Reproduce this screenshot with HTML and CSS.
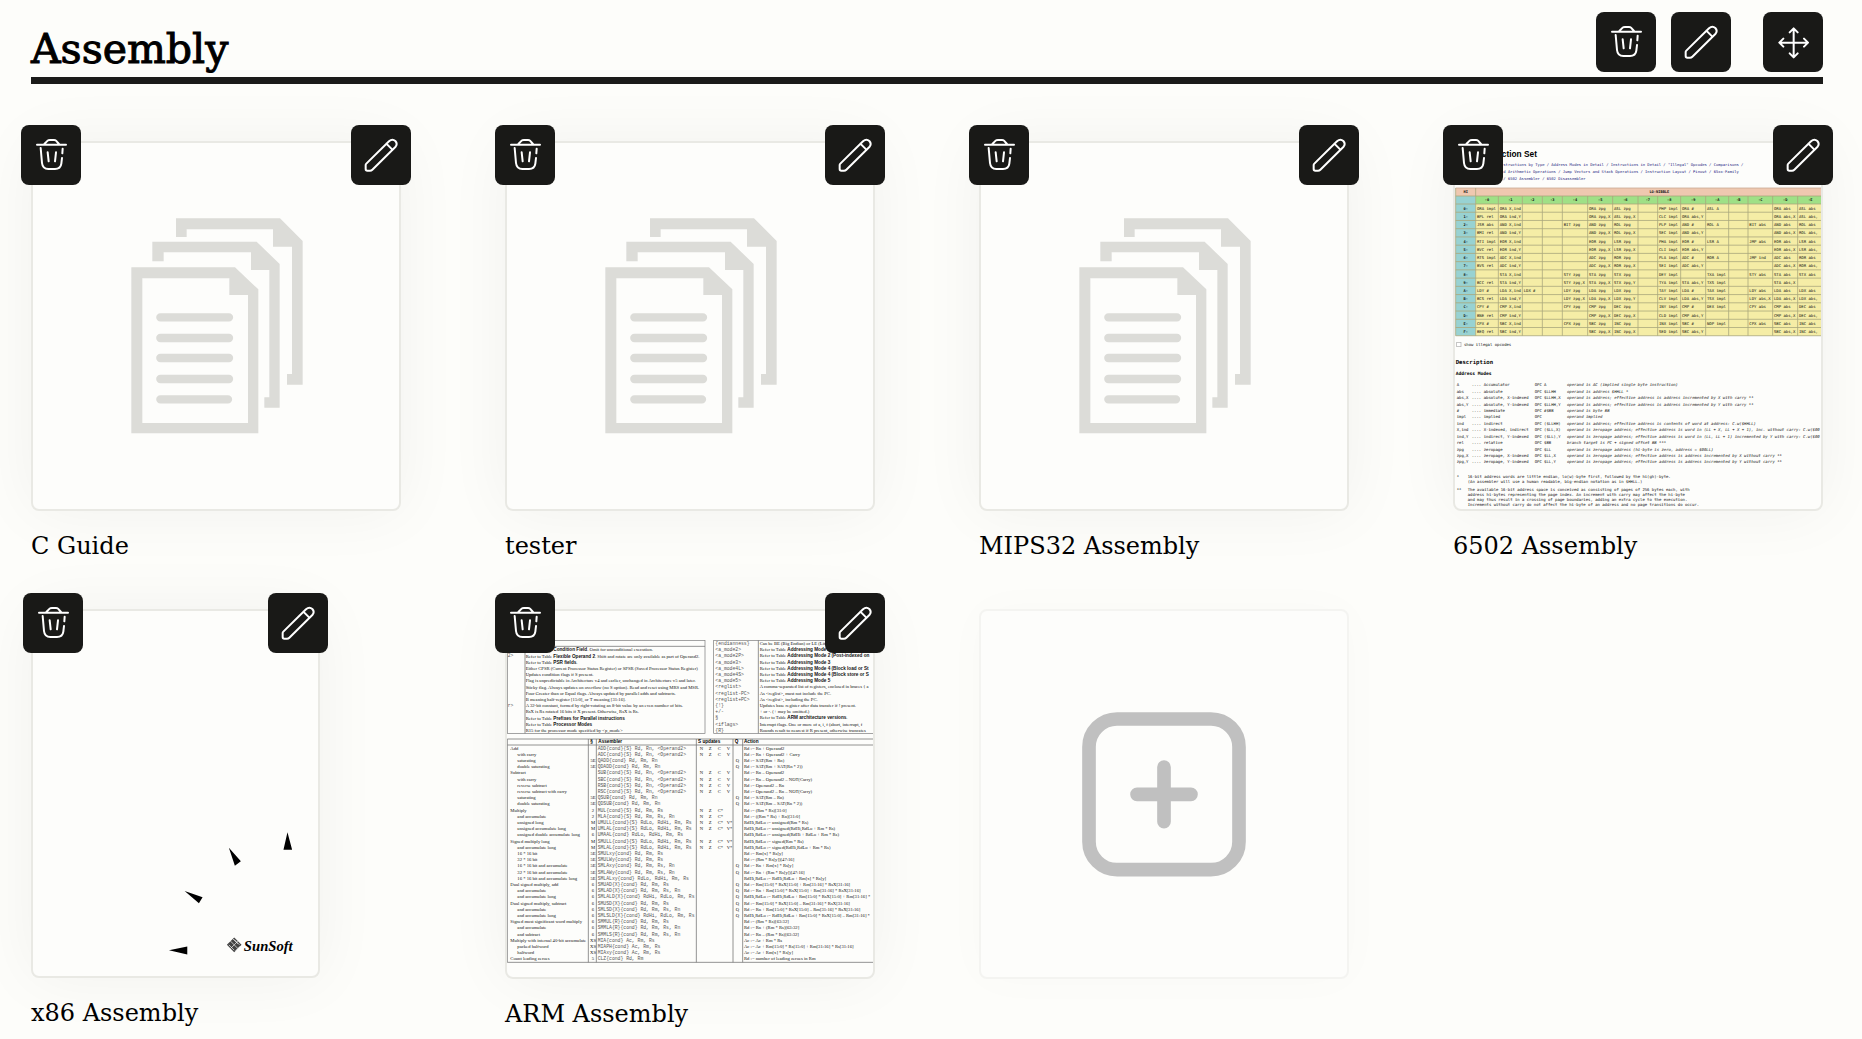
FILE: index.html
```html
<!DOCTYPE html>
<html lang="en">
<head>
<meta charset="utf-8">
<meta name="viewport" content="width=device-width, initial-scale=1">
<title>Assembly</title>
<link rel="stylesheet" href="styles.css">
</head>
<body>
<svg class="sprite" aria-hidden="true">
  <symbol id="trash" viewBox="0 0 180 180">
    <path d="M48 59H135M70 57L80 47Q82 45 87 45H99Q103 45 105 47L114 57M59 69L63 114Q65 132 82 132H102Q119 132 121 116L123 99M125 71L124 85M80 82L83 109M105 82L102 109"/>
  </symbol>
  <symbol id="pencil" viewBox="0 0 180 180">
    <path d="M44 120Q44 118 46 116L114 49Q124 40 133 48Q141 57 133 66L64 134Q61 137 57 137H49Q44 137 44 132ZM106 56L124 74"/>
  </symbol>
  <symbol id="move" viewBox="0 0 180 180">
    <path d="M50 92H134M92 50V134M80 61L92 49L104 61M80 124L92 136L104 124M61 80L49 92L61 104M123 80L135 92L123 104"/>
  </symbol>
  <symbol id="documents" viewBox="-231 -171 1098 1098">
    <path fill-rule="evenodd" d="M64 202H375L445 268V700H64ZM97 235V669H414V285H358V235Z"/>
    <path d="M127 125H440L509 192V623H463V592H478V210H423V157H161V184H127Z"/>
    <path d="M198 55H510L578 123V554H531V522H546V140H489V88H230V111H198Z"/>
    <path class="doc-lines" d="M151 352H357M151 414H357M151 474H357M151 537H357M151 598H354"/>
  </symbol>
</svg>

<main class="page">
  <header class="header">
    <h1 class="title">Assembly</h1>
    <div class="actions">
      <button class="tool" type="button" aria-label="Delete category"><svg class="icon"><use href="#trash"/></svg></button>
      <button class="tool" type="button" aria-label="Edit category"><svg class="icon"><use href="#pencil"/></svg></button>
      <button class="tool tool-move" type="button" aria-label="Move category"><svg class="icon"><use href="#move"/></svg></button>
    </div>
  </header>

  <section class="grid">
    <article class="card">
      <div class="frame">
        <a class="thumb" href="#c-guide" aria-label="C Guide"><svg class="documents"><use href="#documents"/></svg></a>
        <button class="tool tool-left" type="button" aria-label="Delete"><svg class="icon"><use href="#trash"/></svg></button>
        <button class="tool tool-right" type="button" aria-label="Edit"><svg class="icon"><use href="#pencil"/></svg></button>
      </div>
      <h2 class="label">C Guide</h2>
    </article>

    <article class="card">
      <div class="frame">
        <a class="thumb" href="#tester" aria-label="tester"><svg class="documents"><use href="#documents"/></svg></a>
        <button class="tool tool-left" type="button" aria-label="Delete"><svg class="icon"><use href="#trash"/></svg></button>
        <button class="tool tool-right" type="button" aria-label="Edit"><svg class="icon"><use href="#pencil"/></svg></button>
      </div>
      <h2 class="label">tester</h2>
    </article>

    <article class="card">
      <div class="frame">
        <a class="thumb" href="#mips32" aria-label="MIPS32 Assembly"><svg class="documents"><use href="#documents"/></svg></a>
        <button class="tool tool-left" type="button" aria-label="Delete"><svg class="icon"><use href="#trash"/></svg></button>
        <button class="tool tool-right" type="button" aria-label="Edit"><svg class="icon"><use href="#pencil"/></svg></button>
      </div>
      <h2 class="label">MIPS32 Assembly</h2>
    </article>

    <article class="card">
      <div class="frame">
        <a class="thumb" href="#6502" aria-label="6502 Assembly"><svg id="preview-6502" class="preview" viewBox="60 60 10980 10980"></svg></a>
        <button class="tool tool-left" type="button" aria-label="Delete"><svg class="icon"><use href="#trash"/></svg></button>
        <button class="tool tool-right" type="button" aria-label="Edit"><svg class="icon"><use href="#pencil"/></svg></button>
      </div>
      <h2 class="label">6502 Assembly</h2>
    </article>

    <article class="card">
      <div class="frame frame-tall">
        <a class="thumb" href="#x86" aria-label="x86 Assembly">
          <svg class="preview" viewBox="99 93 852 1098">
            <path d="M862 758L876 810H850ZM686 804L722 845L704 858ZM553 934L607 953L596 971ZM506 1112L561 1101V1125Z"/>
            <path fill="#444" d="M702 1074L724 1096L702 1118L680 1096Z"/>
            <path class="sun" d="M691 1085L702 1096L691 1107M698 1078L713 1093M713 1085L702 1096L713 1107M686 1096L702 1112M702 1080L718 1096M706 1114L720 1100"/>
            <text class="sunsoft" x="731" y="1114">SunSoft</text>
          </svg>
        </a>
        <button class="tool tool-left" type="button" aria-label="Delete"><svg class="icon"><use href="#trash"/></svg></button>
        <button class="tool tool-right" type="button" aria-label="Edit"><svg class="icon"><use href="#pencil"/></svg></button>
      </div>
      <h2 class="label">x86 Assembly</h2>
    </article>

    <article class="card">
      <div class="frame">
        <a class="thumb" href="#arm" aria-label="ARM Assembly"><svg id="preview-arm" class="preview" viewBox="60 60 10980 10980"></svg></a>
        <button class="tool tool-left" type="button" aria-label="Delete"><svg class="icon"><use href="#trash"/></svg></button>
        <button class="tool tool-right" type="button" aria-label="Edit"><svg class="icon"><use href="#pencil"/></svg></button>
      </div>
      <h2 class="label">ARM Assembly</h2>
    </article>

    <div class="card">
      <button class="thumb thumb-add" type="button" aria-label="Add item">
        <svg class="add" viewBox="63 63 1098 1098"><rect x="387" y="387" width="450" height="452" rx="84"/><path d="M531 613H693M612 531V695"/></svg>
      </button>
    </div>
  </section>
</main>
<script src="previews.js"></script>
</body>
</html>
```
FILE: styles.css
```css
* { box-sizing: border-box; }

body {
  margin: 0;
  background: #fdfdfa;
  color: #000;
  font-family: "DejaVu Serif", serif;
}

.sprite { position: absolute; width: 0; height: 0; }

.page { padding: 12px 39px 8px 31px; }

.header {
  display: flex;
  align-items: flex-end;
  justify-content: space-between;
  padding-bottom: 5px;
  border-bottom: 7px solid #1b1b19;
}

.title {
  margin: 0;
  font-size: 41px;
  line-height: 46px;
  font-weight: 400;
  -webkit-text-stroke: 1px #000;
}

.actions { display: flex; gap: 15px; }

.tool {
  display: block;
  width: 60px;
  height: 60px;
  padding: 0;
  border: 0;
  border-radius: 8px;
  background: #191917;
  cursor: pointer;
}
.tool-move { margin-left: 17px; }
.tool-left, .tool-right { position: absolute; top: -16px; }
.tool-left { left: -10px; }
.tool-right { right: -10px; }
.frame-tall .tool-left { left: -8px; }
.frame-tall .tool-right { right: -8px; }

.icon {
  display: block;
  width: 100%;
  height: 100%;
  fill: none;
  stroke: #fff;
  stroke-width: 6;
  stroke-linecap: round;
  stroke-linejoin: round;
}

.grid {
  display: grid;
  grid-template-columns: repeat(4, 1fr);
  gap: 47px 104px;
  margin-top: 57px;
}

.frame { position: relative; aspect-ratio: 1; }
.frame-tall { width: 78%; aspect-ratio: 289 / 370; }

.thumb {
  display: block;
  width: 100%;
  height: 100%;
  padding: 0;
  overflow: hidden;
  border: 2px solid #e9e9e4;
  border-radius: 8px;
  background: #fdfdfb;
  box-shadow: 0 0 64px rgba(0, 0, 40, 0.05);
}
.thumb-add {
  height: auto;
  aspect-ratio: 1;
  border-color: #f4f4f1;
  box-shadow: 0 0 48px rgba(0, 0, 40, 0.02);
  cursor: pointer;
}

.label {
  margin: 19px 0 0;
  font-size: 24px;
  line-height: 32px;
  font-weight: 400;
}

.documents, .preview, .add { display: block; width: 100%; height: 100%; }
.documents { fill: #dcdcd8; }
.doc-lines { fill: none; stroke: #dcdcd8; stroke-width: 25; stroke-linecap: round; }
.add { fill: none; stroke: #c0c0c0; stroke-width: 41; stroke-linecap: round; }

.sun { fill: none; stroke: #fff; stroke-width: 2; }
.sunsoft { font: italic bold 44px "Liberation Serif", serif; }

.preview text { white-space: pre; }
.mono { font-family: "DejaVu Sans Mono", monospace; }
.courier { font-family: "Liberation Mono", monospace; }
.sans { font-family: "Liberation Sans", sans-serif; }
.serif { font-family: "Liberation Serif", serif; }
.bold { font-weight: 700; font-family: "Liberation Sans", sans-serif; }
.strong { font-weight: 700; }
.italic { font-style: italic; }
.blue { fill: #222280; }
.dark { fill: #111; }
.grey { fill: #555; }
```
FILE: previews.js
```js
const NS = "http://www.w3.org/2000/svg";
const u = v => Math.round(v * 10);

function add(parent, name, attrs, content) {
  const el = document.createElementNS(NS, name);
  for (const key in attrs) el.setAttribute(key, attrs[key]);
  if (content !== undefined) el.textContent = content;
  parent.appendChild(el);
  return el;
}

function painter(svg) {
  return {
    text(x, y, size, cls, content, anchor) {
      const el = add(svg, "text", { x: u(x), y: u(y), "font-size": u(size), class: cls, "text-anchor": anchor || "start" });
      // Text between @@ pairs is set in bold.
      content.split("@@").forEach((part, i) => part && add(el, "tspan", i % 2 ? { class: "bold" } : {}, part));
    },
    rect(x, y, w, h, fill, stroke) {
      add(svg, "rect", { x: u(x), y: u(y), width: u(w), height: u(h), fill, stroke: stroke || "none", "stroke-width": 20 });
    },
    line(x1, y1, x2, y2, stroke) {
      add(svg, "line", { x1: u(x1), y1: u(y1), x2: u(x2), y2: u(y2), stroke, "stroke-width": 24 });
    }
  };
}

// 6502 instruction set page
(function () {
  const p = painter(document.getElementById("preview-6502"));
  p.text(252, 47, 25, "sans strong", "6502 Instruction Set", "end");
  p.text(151, 75, 11.4, "mono blue", "structions by Type / Address Modes in Detail / Instructions in Detail / \"Illegal\" Opcodes / Comparisons /");
  p.text(151, 95, 11.4, "mono blue", "d Arithmetic Operations / Jump Vectors and Stack Operations / Instruction Layout / Pinout / 65xx-Family");
  p.text(151, 118, 11.4, "mono blue", "/ 6502 Assembler / 6502 Disassembler");

  const cols = [8, 68, 136, 208, 268, 328, 404, 479, 555, 614, 683, 758, 827, 885, 959, 1034, 1110];
  const top = 189, step = 24.7, bottom = top + 16 * step;
  p.rect(8, 141, 1102, 24, "#efc8b0");
  p.rect(8, 165, 60, bottom - 165, "#98d2d2");
  p.rect(68, 165, 1042, 24, "#9fe086");
  p.rect(68, top, 1042, bottom - top, "#f5eda6");
  const grid = "#aaa77c";
  for (let r = 0; r <= 16; r++) p.line(8, top + r * step, 1110, top + r * step, grid);
  p.line(8, 141, 1110, 141, "#c9a894");
  p.line(8, 165, 1110, 165, grid);
  cols.forEach((x, i) => p.line(x, i < 2 ? 141 : 165, x, bottom, grid));
  p.text(38, 157, 11, "mono strong dark", "HI", "middle");
  p.text(619, 157, 11, "mono strong dark", "LO-NIBBLE", "middle");
  const hex = "0123456789ABCDEF";
  for (let c = 0; c < 15; c++) p.text((cols[c + 1] + cols[c + 2]) / 2, 181, 11, "mono strong dark", "-" + hex[c], "middle");

  const ops = [
    "ORA impl|ORA X,ind||||ORA zpg|ASL zpg||PHP impl|ORA #|ASL A|||ORA abs|ASL abs",
    "BPL rel|ORA ind,Y||||ORA zpg,X|ASL zpg,X||CLC impl|ORA abs,Y||||ORA abs,X|ASL abs,",
    "JSR abs|AND X,ind|||BIT zpg|AND zpg|ROL zpg||PLP impl|AND #|ROL A||BIT abs|AND abs|ROL abs",
    "BMI rel|AND ind,Y||||AND zpg,X|ROL zpg,X||SEC impl|AND abs,Y||||AND abs,X|ROL abs,",
    "RTI impl|EOR X,ind||||EOR zpg|LSR zpg||PHA impl|EOR #|LSR A||JMP abs|EOR abs|LSR abs",
    "BVC rel|EOR ind,Y||||EOR zpg,X|LSR zpg,X||CLI impl|EOR abs,Y||||EOR abs,X|LSR abs,",
    "RTS impl|ADC X,ind||||ADC zpg|ROR zpg||PLA impl|ADC #|ROR A||JMP ind|ADC abs|ROR abs",
    "BVS rel|ADC ind,Y||||ADC zpg,X|ROR zpg,X||SEI impl|ADC abs,Y||||ADC abs,X|ROR abs,",
    "|STA X,ind|||STY zpg|STA zpg|STX zpg||DEY impl||TXA impl||STY abs|STA abs|STX abs",
    "BCC rel|STA ind,Y|||STY zpg,X|STA zpg,X|STX zpg,Y||TYA impl|STA abs,Y|TXS impl|||STA abs,X|",
    "LDY #|LDA X,ind|LDX #||LDY zpg|LDA zpg|LDX zpg||TAY impl|LDA #|TAX impl||LDY abs|LDA abs|LDX abs",
    "BCS rel|LDA ind,Y|||LDY zpg,X|LDA zpg,X|LDX zpg,Y||CLV impl|LDA abs,Y|TSX impl||LDY abs,X|LDA abs,X|LDX abs,",
    "CPY #|CMP X,ind|||CPY zpg|CMP zpg|DEC zpg||INY impl|CMP #|DEX impl||CPY abs|CMP abs|DEC abs",
    "BNE rel|CMP ind,Y||||CMP zpg,X|DEC zpg,X||CLD impl|CMP abs,Y||||CMP abs,X|DEC abs,",
    "CPX #|SBC X,ind|||CPX zpg|SBC zpg|INC zpg||INX impl|SBC #|NOP impl||CPX abs|SBC abs|INC abs",
    "BEQ rel|SBC ind,Y||||SBC zpg,X|INC zpg,X||SED impl|SBC abs,Y||||SBC abs,X|INC abs,"
  ];
  ops.forEach((row, r) => {
    const y = top + r * step + 17;
    p.text(38, y, 11, "mono strong dark", hex[r] + "-", "middle");
    row.split("|").forEach((op, c) => op && p.text(cols[c + 1] + 4, y, 11.8, "mono dark", op));
  });

  p.rect(11, 604, 13, 13, "#fff", "#aaa");
  p.text(33, 614, 11.8, "mono dark", "show illegal opcodes");
  p.text(8, 668, 17, "mono strong", "Description");
  p.text(8, 703, 13.8, "mono strong", "Address Modes");

  const modes = [
    "A|....|Accumulator|OPC A|operand is AC (implied single byte instruction)",
    "abs|....|absolute|OPC $LLHH|operand is address $HHLL *",
    "abs,X|....|absolute, X-indexed|OPC $LLHH,X|operand is address; effective address is address incremented by X with carry **",
    "abs,Y|....|absolute, Y-indexed|OPC $LLHH,Y|operand is address; effective address is address incremented by Y with carry **",
    "#|....|immediate|OPC #$BB|operand is byte BB",
    "impl|....|implied|OPC|operand implied",
    "ind|....|indirect|OPC ($LLHH)|operand is address; effective address is contents of word at address: C.w($HHLL)",
    "X,ind|....|X-indexed, indirect|OPC ($LL,X)|operand is zeropage address; effective address is word in (LL + X, LL + X + 1), inc. without carry: C.w($00",
    "ind,Y|....|indirect, Y-indexed|OPC ($LL),Y|operand is zeropage address; effective address is word in (LL, LL + 1) incremented by Y with carry: C.w($00",
    "rel|....|relative|OPC $BB|branch target is PC + signed offset BB ***",
    "zpg|....|zeropage|OPC $LL|operand is zeropage address (hi-byte is zero, address = $00LL)",
    "zpg,X|....|zeropage, X-indexed|OPC $LL,X|operand is zeropage address; effective address is address incremented by X without carry **",
    "zpg,Y|....|zeropage, Y-indexed|OPC $LL,Y|operand is zeropage address; effective address is address incremented by Y without carry **"
  ];
  const xs = [11, 56, 92, 245, 342];
  modes.forEach((row, r) => row.split("|").forEach((cell, c) =>
    p.text(xs[c], 736 + r * 19.25, 11.8, c === 4 ? "mono dark italic" : "mono dark", cell)));

  [
    [1011, "*", "16-bit address words are little endian, lo(w)-byte first, followed by the hi(gh)-byte."],
    [1027, "", "(An assembler will use a human readable, big-endian notation as in $HHLL.)"],
    [1049, "**", "The available 16-bit address space is conceived as consisting of pages of 256 bytes each, with"],
    [1064, "", "address hi-bytes representing the page index. An increment with carry may affect the hi-byte"],
    [1079, "", "and may thus result in a crossing of page boundaries, adding an extra cycle to the execution."],
    [1094, "", "Increments without carry do not affect the hi-byte of an address and no page transitions do occur."]
  ].forEach(([y, mark, line]) => {
    p.text(11, y, 11.8, "mono dark", mark);
    p.text(44, y, 11.8, "mono dark", line);
  });
})();

// ARM quick reference page
(function () {
  const p = painter(document.getElementById("preview-arm"));
  const ink = "#777";
  const pitch = 18.6;

  p.rect(7, 94, 593, 279, "none", ink);
  p.line(60, 94, 60, 373, ink);
  p.line(7, 112, 600, 112, ink);
  [
    "Refer to Table @@Condition Field@@. Omit for unconditional execution.",
    "Refer to Table @@Flexible Operand 2@@. Shift and rotate are only available as part of Operand2.",
    "Refer to Table @@PSR fields@@.",
    "Either CPSR (Current Processor Status Register) or SPSR (Saved Processor Status Register)",
    "Updates condition flags if S present.",
    "Flag is unpredictable in Architecture v4 and earlier, unchanged in Architecture v5 and later.",
    "Sticky flag. Always updates on overflow (no S option). Read and reset using MRS and MSR.",
    "Four Greater than or Equal flags. Always updated by parallel adds and subtracts.",
    "B meaning half-register [15:0], or T meaning [31:16].",
    "A 32-bit constant, formed by right-rotating an 8-bit value by an even number of bits.",
    "RsX is Rs rotated 16 bits if X present. Otherwise, RsX is Rs.",
    "Refer to Table @@Prefixes for Parallel instructions@@",
    "Refer to Table @@Processor Modes@@",
    "R15 for the processor mode specified by <p_mode>"
  ].forEach((line, i) => p.text(62, 127 + i * pitch, 14, "serif dark", line));
  p.text(8, 145, 14, "courier grey", "2>");
  p.text(8, 294, 14, "courier grey", "r>");

  p.rect(626, 94, 500, 279, "none", ink);
  p.line(760, 94, 760, 373, ink);
  [
    ["{endianness}", "Can be BE (Big Endian) or LE (Little Endian)."],
    ["<a_mode2>", "Refer to Table @@Addressing Mode 2@@."],
    ["<a_mode2P>", "Refer to Table @@Addressing Mode 2 (Post-indexed on@@"],
    ["<a_mode3>", "Refer to Table @@Addressing Mode 3@@"],
    ["<a_mode4L>", "Refer to Table @@Addressing Mode 4 (Block load or St@@"],
    ["<a_mode4S>", "Refer to Table @@Addressing Mode 4 (Block store or S@@"],
    ["<a_mode5>", "Refer to Table @@Addressing Mode 5@@"],
    ["<reglist>", "A comma-separated list of registers, enclosed in braces { a"],
    ["<reglist-PC>", "As <reglist>, must not include the PC."],
    ["<reglist+PC>", "As <reglist>, including the PC."],
    ["{!}", "Updates base register after data transfer if ! present."],
    ["+/-", "+ or -. (+ may be omitted.)"],
    ["§", "Refer to Table @@ARM architecture versions@@."],
    ["<iflags>", "Interrupt flags. One or more of a, i, f (abort, interrupt, f"],
    ["{R}", "Rounds result to nearest if R present, otherwise truncates"]
  ].forEach(([name, line], i) => {
    p.text(631, 108 + i * pitch, 14.3, "courier grey", name);
    p.text(764, 108 + i * pitch, 14, "serif dark", line);
  });

  p.line(7, 390, 1110, 390, ink);
  p.line(7, 408, 1110, 408, ink);
  p.line(7, 1060, 1110, 1060, ink);
  [7, 250, 274, 574, 684, 713].forEach(x => p.line(x, 390, x, 1060, ink));
  p.text(256, 403, 14, "bold", "§");
  p.text(280, 403, 14, "bold", "Assembler");
  p.text(579, 403, 14, "bold", "S updates");
  p.text(689, 403, 14, "bold", "Q");
  p.text(717, 403, 14, "bold", "Action");

  [
    "Add||ADD{cond}{S} Rd, Rn, <Operand2>|NZCV||Rd := Rn + Operand2",
    " with carry||ADC{cond}{S} Rd, Rn, <Operand2>|NZCV||Rd := Rn + Operand2 + Carry",
    " saturating|5E|QADD{cond} Rd, Rm, Rn||Q|Rd := SAT(Rm + Rn)",
    " double saturating|5E|QDADD{cond} Rd, Rm, Rn||Q|Rd := SAT(Rm + SAT(Rn * 2))",
    "Subtract||SUB{cond}{S} Rd, Rn, <Operand2>|NZCV||Rd := Rn – Operand2",
    " with carry||SBC{cond}{S} Rd, Rn, <Operand2>|NZCV||Rd := Rn – Operand2 – NOT(Carry)",
    " reverse subtract||RSB{cond}{S} Rd, Rn, <Operand2>|NZCV||Rd := Operand2 – Rn",
    " reverse subtract with carry||RSC{cond}{S} Rd, Rn, <Operand2>|NZCV||Rd := Operand2 – Rn – NOT(Carry)",
    " saturating|5E|QSUB{cond} Rd, Rm, Rn||Q|Rd := SAT(Rm – Rn)",
    " double saturating|5E|QDSUB{cond} Rd, Rm, Rn||Q|Rd := SAT(Rm – SAT(Rn * 2))",
    "Multiply|2|MUL{cond}{S} Rd, Rm, Rs|NZc||Rd := (Rm * Rs)[31:0]",
    " and accumulate|2|MLA{cond}{S} Rd, Rm, Rs, Rn|NZc||Rd := ((Rm * Rs) + Rn)[31:0]",
    " unsigned long|M|UMULL{cond}{S} RdLo, RdHi, Rm, Rs|NZcv||RdHi,RdLo := unsigned(Rm * Rs)",
    " unsigned accumulate long|M|UMLAL{cond}{S} RdLo, RdHi, Rm, Rs|NZcv||RdHi,RdLo := unsigned(RdHi,RdLo + Rm * Rs)",
    " unsigned double accumulate long|6|UMAAL{cond} RdLo, RdHi, Rm, Rs|||RdHi,RdLo := unsigned(RdHi + RdLo + Rm * Rs)",
    "Signed multiply long|M|SMULL{cond}{S} RdLo, RdHi, Rm, Rs|NZcv||RdHi,RdLo := signed(Rm * Rs)",
    " and accumulate long|M|SMLAL{cond}{S} RdLo, RdHi, Rm, Rs|NZcv||RdHi,RdLo := signed(RdHi,RdLo + Rm * Rs)",
    " 16 * 16 bit|5E|SMULxy{cond} Rd, Rm, Rs|||Rd := Rm[x] * Rs[y]",
    " 32 * 16 bit|5E|SMULWy{cond} Rd, Rm, Rs|||Rd := (Rm * Rs[y])[47:16]",
    " 16 * 16 bit and accumulate|5E|SMLAxy{cond} Rd, Rm, Rs, Rn||Q|Rd := Rn + Rm[x] * Rs[y]",
    " 32 * 16 bit and accumulate|5E|SMLAWy{cond} Rd, Rm, Rs, Rn||Q|Rd := Rn + (Rm * Rs[y])[47:16]",
    " 16 * 16 bit and accumulate long|5E|SMLALxy{cond} RdLo, RdHi, Rm, Rs|||RdHi,RdLo := RdHi,RdLo + Rm[x] * Rs[y]",
    "Dual signed multiply, add|6|SMUAD{X}{cond} Rd, Rm, Rs||Q|Rd := Rm[15:0] * RsX[15:0] + Rm[31:16] * RsX[31:16]",
    " and accumulate|6|SMLAD{X}{cond} Rd, Rm, Rs, Rn||Q|Rd := Rn + Rm[15:0] * RsX[15:0] + Rm[31:16] * RsX[31:16]",
    " and accumulate long|6|SMLALD{X}{cond} RdHi, RdLo, Rm, Rs||Q|RdHi,RdLo := RdHi,RdLo + Rm[15:0] * RsX[15:0] + Rm[31:16] *",
    "Dual signed multiply, subtract|6|SMUSD{X}{cond} Rd, Rm, Rs||Q|Rd := Rm[15:0] * RsX[15:0] – Rm[31:16] * RsX[31:16]",
    " and accumulate|6|SMLSD{X}{cond} Rd, Rm, Rs, Rn||Q|Rd := Rn + Rm[15:0] * RsX[15:0] – Rm[31:16] * RsX[31:16]",
    " and accumulate long|6|SMLSLD{X}{cond} RdHi, RdLo, Rm, Rs||Q|RdHi,RdLo := RdHi,RdLo + Rm[15:0] * RsX[15:0] – Rm[31:16] *",
    "Signed most significant word multiply|6|SMMUL{R}{cond} Rd, Rm, Rs|||Rd := (Rm * Rs)[63:32]",
    " and accumulate|6|SMMLA{R}{cond} Rd, Rm, Rs, Rn|||Rd := Rn + (Rm * Rs)[63:32]",
    " and subtract|6|SMMLS{R}{cond} Rd, Rm, Rs, Rn|||Rd := Rn – (Rm * Rs)[63:32]",
    "Multiply with internal 40-bit accumulate|XS|MIA{cond} Ac, Rm, Rs|||Ac := Ac + Rm * Rs",
    " packed halfword|XS|MIAPH{cond} Ac, Rm, Rs|||Ac := Ac + Rm[15:0] * Rs[15:0] + Rm[31:16] * Rs[31:16]",
    " halfword|XS|MIAxy{cond} Ac, Rm, Rs|||Ac := Ac + Rm[x] * Rs[y]",
    "Count leading zeroes|5|CLZ{cond} Rd, Rm|||Rd := number of leading zeroes in Rm"
  ].forEach((row, i) => {
    const y = 422 + i * pitch;
    const [name, arch, code, flags, q, action] = row.split("|");
    p.text(name[0] === " " ? 37 : 16, y, 14, "serif dark", name.trim());
    p.text(264, y, 14, "serif dark", arch, "middle");
    p.text(278, y, 14.3, "courier grey", code);
    // Lower-case flags are the ones printed with an asterisk.
    [...flags].forEach((flag, f) =>
      p.text(584 + f * 27, y, 14, "serif dark", /[a-z]/.test(flag) ? flag.toUpperCase() + "*" : flag));
    p.text(692, y, 14, "serif dark", q);
    p.text(717, y, 14, "serif dark", action);
  });
})();
```
